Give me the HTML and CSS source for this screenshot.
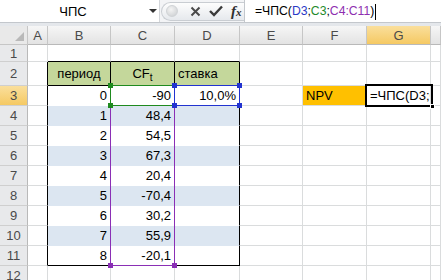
FILE: index.html
```html
<!DOCTYPE html>
<html lang="ru">
<head>
    <meta charset="UTF-8">
    <meta name="viewport" content="width=device-width, initial-scale=1.0">
    <title>ЧПС</title>
    <link rel="stylesheet" href="styles.css">
</head>
<body>
    <div class="formula-bar">
        <div class="name-box">
            <span class="name">ЧПС</span>
            <span class="drop"></span>
        </div>
        <div class="tools">
            <div class="pill">
                <span class="knob"></span>
                <svg class="ico" width="11" height="11" viewBox="0 0 11 11">
                    <path d="M1.5 1.5 L9.5 9.5 M9.5 1.5 L1.5 9.5" stroke="#4a4a4a" stroke-width="2" fill="none"/>
                </svg>
                <svg class="ico" width="14" height="12" viewBox="0 0 14 12">
                    <path d="M1 6 L5 10 L13 1.5" stroke="#3a3a3a" stroke-width="2.4" fill="none"/>
                </svg>
                <span class="fx"><i>f</i><i class="x">x</i></span>
            </div>
        </div>
        <div class="formula">=ЧПС(<span class="r-blue">D3</span>;<span class="r-green">C3</span>;<span class="r-purple">C4:C11</span>)<span class="caret"></span></div>
    </div>

    <div class="sheet">
        <!-- column headers -->
        <div class="corner"><span class="tri"></span></div>
        <div class="hd">A</div>
        <div class="hd">B</div>
        <div class="hd">C</div>
        <div class="hd">D</div>
        <div class="hd">E</div>
        <div class="hd">F</div>
        <div class="hd sel">G</div>
        <div class="hd"></div>

        <!-- 1 -->
        <div class="rh">1</div>
        <div class="c"></div>
        <div class="c eb"></div>
        <div class="c eb"></div>
        <div class="c eb"></div>
        <div class="c"></div>
        <div class="c"></div>
        <div class="c"></div>
        <div class="c"></div>

        <!-- 2 -->
        <div class="rh">2</div>
        <div class="c er"></div>
        <div class="c th mid">период</div>
        <div class="c th mid"><span>CF<sub>t</sub></span></div>
        <div class="c th">ставка</div>
        <div class="c"></div>
        <div class="c"></div>
        <div class="c"></div>
        <div class="c"></div>

        <!-- 3 -->
        <div class="rh sel">3</div>
        <div class="c er"></div>
        <div class="c tw num">0</div>
        <div class="c tw num">-90</div>
        <div class="c tw num er">10,0%</div>
        <div class="c"></div>
        <div class="c npv">NPV</div>
        <div class="c edit">=ЧПС(D3;C3;C4:C11)</div>
        <div class="c"></div>

        <!-- 4 -->
        <div class="rh">4</div>
        <div class="c er"></div>
        <div class="c tb num">1</div>
        <div class="c tb num">48,4</div>
        <div class="c tb er"></div>
        <div class="c"></div>
        <div class="c"></div>
        <div class="c"></div>
        <div class="c"></div>

        <!-- 5 -->
        <div class="rh">5</div>
        <div class="c er"></div>
        <div class="c tw num">2</div>
        <div class="c tw num">54,5</div>
        <div class="c tw er"></div>
        <div class="c"></div>
        <div class="c"></div>
        <div class="c"></div>
        <div class="c"></div>

        <!-- 6 -->
        <div class="rh">6</div>
        <div class="c er"></div>
        <div class="c tb num">3</div>
        <div class="c tb num">67,3</div>
        <div class="c tb er"></div>
        <div class="c"></div>
        <div class="c"></div>
        <div class="c"></div>
        <div class="c"></div>

        <!-- 7 -->
        <div class="rh">7</div>
        <div class="c er"></div>
        <div class="c tw num">4</div>
        <div class="c tw num">20,4</div>
        <div class="c tw er"></div>
        <div class="c"></div>
        <div class="c"></div>
        <div class="c"></div>
        <div class="c"></div>

        <!-- 8 -->
        <div class="rh">8</div>
        <div class="c er"></div>
        <div class="c tb num">5</div>
        <div class="c tb num">-70,4</div>
        <div class="c tb er"></div>
        <div class="c"></div>
        <div class="c"></div>
        <div class="c"></div>
        <div class="c"></div>

        <!-- 9 -->
        <div class="rh">9</div>
        <div class="c er"></div>
        <div class="c tw num">6</div>
        <div class="c tw num">30,2</div>
        <div class="c tw er"></div>
        <div class="c"></div>
        <div class="c"></div>
        <div class="c"></div>
        <div class="c"></div>

        <!-- 10 -->
        <div class="rh">10</div>
        <div class="c er"></div>
        <div class="c tb num">7</div>
        <div class="c tb num">55,9</div>
        <div class="c tb er"></div>
        <div class="c"></div>
        <div class="c"></div>
        <div class="c"></div>
        <div class="c"></div>

        <!-- 11 -->
        <div class="rh">11</div>
        <div class="c er"></div>
        <div class="c tw num eb">8</div>
        <div class="c tw num eb">-20,1</div>
        <div class="c tw er eb"></div>
        <div class="c"></div>
        <div class="c"></div>
        <div class="c"></div>
        <div class="c"></div>

        <!-- 12 -->
        <div class="rh">12</div>
        <div class="c"></div>
        <div class="c"></div>
        <div class="c"></div>
        <div class="c"></div>
        <div class="c"></div>
        <div class="c"></div>
        <div class="c"></div>
        <div class="c"></div>

        <!-- formula range outlines -->
        <div class="range rg-purple">
            <span class="h bl"></span><span class="h br"></span>
            <span class="h tl"></span><span class="h tr"></span>
        </div>
        <div class="range rg-green">
            <span class="h tl"></span><span class="h tr"></span>
            <span class="h bl"></span><span class="h br"></span>
        </div>
        <div class="range rg-blue">
            <span class="h tl"></span><span class="h tr"></span>
            <span class="h bl"></span><span class="h br"></span>
        </div>
        <div class="active"><span class="fill"></span></div>
    </div>
</body>
</html>
```

FILE: styles.css
```css
* {
    box-sizing: border-box;
}
body {
    margin: 0;
    width: 441px;
    height: 280px;
    overflow: hidden;
    background: #e4e7eb;
    font-family: "Liberation Sans", Arial, sans-serif;
    font-size: 13px;
    color: #000;
}

/* formula bar */
.formula-bar {
    display: flex;
    height: 23px;
    border-bottom: 1px solid #c3c7cc;
    background: #f3f4f6;
    margin-bottom: 3px;
}
.name-box {
    width: 160px;
    display: flex;
    align-items: center;
    background: #fff;
    border-right: 1px solid #d3d6da;
}
.name {
    width: 146px;
    text-align: center;
}
.drop {
    width: 0;
    height: 0;
    margin-left: 3px;
    border-left: 4px solid transparent;
    border-right: 4px solid transparent;
    border-top: 4px solid #333;
}
.tools {
    width: 84px;
    display: flex;
    align-items: center;
    padding-left: 1px;
}
.pill {
    display: flex;
    align-items: center;
    width: 100%;
    height: 19px;
    border: 1px solid #c9cdd2;
    border-right: none;
    border-radius: 10px 0 0 10px;
    background: linear-gradient(#fdfdfd, #e6e9ed);
    padding-left: 4px;
}
.knob {
    width: 12px;
    height: 12px;
    border-radius: 50%;
    background: radial-gradient(circle at 40% 35%, #f4f4f4, #c9cccf);
    border: 1px solid #d0d3d6;
}
.ico {
    margin-left: 12px;
}
.ico + .ico {
    margin-left: 8px;
}
.fx {
    margin-left: 8px;
    font-family: "Liberation Serif", serif;
    font-size: 15px;
    color: #2f2f2f;
    font-weight: bold;
}
.fx .x {
    font-size: 11px;
}
.formula {
    flex: 1;
    background: #fff;
    border-left: 1px solid #c3c7cc;
    padding-left: 10px;
    font-size: 12.2px;
    line-height: 22px;
    white-space: nowrap;
}
.r-blue {
    color: #2b39c7;
}
.r-green {
    color: #1e8a2a;
}
.r-purple {
    color: #8e2fb0;
}
.caret {
    display: inline-block;
    width: 1px;
    height: 16px;
    background: #000;
    vertical-align: middle;
    margin-left: 1px;
}

/* sheet grid */
.sheet {
    position: relative;
    display: grid;
    grid-template-columns: 28px 20px 63px 64px 65px 63px 64px 64px 10px;
    grid-template-rows: 19px 17px 24px repeat(10, 20px);
    background: #fff;
}
.corner {
    display: flex;
    align-items: flex-end;
    justify-content: flex-end;
    padding: 0 3px 3px 0;
    background: #e9e9e9;
    border-right: 1px solid #c6c6c6;
    border-bottom: 1px solid #c6c6c6;
}
.tri {
    width: 0;
    height: 0;
    border-left: 9px solid transparent;
    border-bottom: 9px solid #b9b9b9;
}
.hd {
    display: flex;
    align-items: center;
    justify-content: center;
    background: linear-gradient(#f6f6f6, #e3e3e3);
    border-right: 1px solid #c6c6c6;
    border-bottom: 1px solid #b9b9b9;
    color: #4a4a4a;
}
.rh {
    display: flex;
    align-items: center;
    justify-content: center;
    background: #e8e9eb;
    border-right: 1px solid #b9b9b9;
    border-bottom: 1px solid #cfcfcf;
    color: #4a4a4a;
}
.hd.sel,
.rh.sel {
    background: linear-gradient(#fadf9c, #f5c963);
}
.c {
    display: flex;
    align-items: center;
    padding: 0 3px;
    overflow: hidden;
    white-space: nowrap;
    border-right: 1px solid #dadcdd;
    border-bottom: 1px solid #dadcdd;
}
.tw {
    background: #fff;
    border-color: #fff;
}
.tb {
    background: #dce6f1;
    border-color: #dce6f1;
}
.th {
    background: #c4d79b;
    border-color: #000;
}
.mid {
    justify-content: center;
}
.num {
    justify-content: flex-end;
}
.npv {
    background: #ffc000;
    border-right-color: #ffc000;
}
.edit {
    padding: 0 0 0 3px;
}
.er {
    border-right-color: #000;
}
.eb {
    border-bottom-color: #000;
}
sub {
    font-size: 10px;
    vertical-align: -3px;
    line-height: 0;
}

/* range outlines drawn over the grid */
.range {
    position: absolute;
    border: 1px solid;
}
.range .h {
    position: absolute;
    width: 5px;
    height: 5px;
    background: currentColor;
}
.h.tl { left: -3px; top: -3px; }
.h.tr { right: -3px; top: -3px; }
.h.bl { left: -3px; bottom: -3px; }
.h.br { right: -3px; bottom: -3px; }
.rg-green {
    color: #1f8a1f;
    left: 110px;
    top: 59px;
    width: 65px;
    height: 21px;
}
.rg-blue {
    color: #2233d0;
    left: 174px;
    top: 59px;
    width: 66px;
    height: 21px;
}
.rg-purple {
    color: #8a2fb5;
    left: 110px;
    top: 79px;
    width: 65px;
    height: 161px;
}
.active {
    position: absolute;
    left: 365px;
    top: 58px;
    width: 68px;
    height: 23px;
    border: 2px solid #000;
}
.fill {
    position: absolute;
    right: -4px;
    bottom: -4px;
    width: 5px;
    height: 5px;
    background: #000;
    border: 1px solid #fff;
}
```
